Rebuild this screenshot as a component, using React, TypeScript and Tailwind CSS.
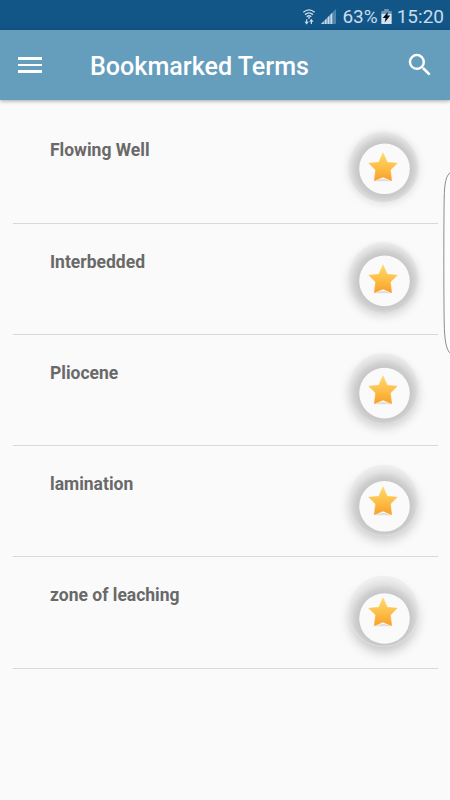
interface Term {
  name: string;
  // vertical distance from the button's centre to its inner disc
  discOffset: number;
  shadow: string;
}

const terms: Term[] = [
  { name: 'Flowing Well', discOffset: 2.3, shadow: 'shadow-[0_2px_9px_rgba(0,0,0,0.11)]' },
  { name: 'Interbedded', discOffset: 3.4, shadow: 'shadow-[0_4px_9px_rgba(0,0,0,0.13)]' },
  { name: 'Pliocene', discOffset: 4.6, shadow: 'shadow-[0_5px_10px_rgba(0,0,0,0.15)]' },
  { name: 'lamination', discOffset: 5.8, shadow: 'shadow-[0_6px_11px_-1px_rgba(0,0,0,0.18)]' },
  { name: 'zone of leaching', discOffset: 7, shadow: 'shadow-[0_7px_12px_-2px_rgba(0,0,0,0.22)]' },
];

function StatusBar() {
  return (
    <div className="flex h-[30px] items-center justify-end bg-[#125688] pt-[3px] pr-[6px] text-[19px] leading-none text-[#c9dcec]">
      <svg className="mr-[5px] h-[17px] w-[14px]" viewBox="0 0 14 18" fill="none" stroke="currentColor">
        <path d="M1 4.5Q7-.5 13 4.5M2.8 7Q7 3.3 11.2 7M4.6 9.3Q7 7.3 9.4 9.3" strokeWidth="1.5" />
        <circle cx="7" cy="10.5" r="1" fill="currentColor" stroke="none" />
        <path d="M4.5 12v4M9.5 17v-4" strokeWidth="1.3" />
        <path d="M2.2 14.5h4.6L4.5 17.5zM7.2 14.5h4.6L9.5 11.5z" fill="currentColor" stroke="none" />
      </svg>
      <svg className="mr-[6px] h-[15px] w-[15px]" viewBox="0 0 16 16" fill="currentColor">
        <path d="M0 16L16 0V16z" opacity=".35" />
        <path d="M0 16l3-3v3zM4 12l2-2v6H4zM7 9l2-2v9H7zM10 6l2-2v12h-2z" />
      </svg>
      <span>63%</span>
      <svg className="mr-[5px] ml-[3px] h-[15px] w-[11px]" viewBox="0 0 11 16">
        <path d="M3 0h5v2h3v3H0V2h3z" fill="#6c97b8" />
        <path d="M0 5h11v11H0z" fill="#d5e4ef" />
        <path d="M7 3L1.5 9.5h3L3.5 14.5l6-7.5H6.5z" fill="#05101a" />
      </svg>
      <span>15:20</span>
    </div>
  );
}

function Star({ id }: { id: string }) {
  return (
    <svg className="relative mt-[2px] h-[30px] w-[30px]" viewBox="0 0 30 30">
      <defs>
        <linearGradient id={id} x1="0" y1="0" x2="0" y2="1">
          <stop offset="0" stopColor="#ffd969" />
          <stop offset="0.5" stopColor="#fdc04a" />
          <stop offset="1" stopColor="#f99f29" />
        </linearGradient>
      </defs>
      <path d="M7 29.3Q15 24.5 23 29.3z" fill="#dedede" />
      <path
        d="M15 .8l4.2 9.5 10 .9-6.8 6.8 1.2 10.7L15 25l-8.6 3.7L7.6 18 .8 11.2l10-.9z"
        fill={`url(#${id})`}
        stroke={`url(#${id})`}
        strokeWidth="0.6"
        strokeLinejoin="round"
      />
    </svg>
  );
}

function BookmarkButton({ term, id }: { term: Term; id: string }) {
  const discY = 35.5 + term.discOffset;

  return (
    <button className={`relative mt-[18.6px] mr-[19px] flex h-[71px] w-[71px] items-center justify-center rounded-full ${term.shadow}`}>
      <svg className="absolute inset-0 h-[71px] w-[71px]" viewBox="0 0 71 71">
        <defs>
          <radialGradient id={`ring-${id}`} gradientUnits="userSpaceOnUse" cx="36.2" cy={discY} r="42">
            <stop offset="0.6" stopColor="#c6c6c6" />
            <stop offset="0.7" stopColor="#d0d0d0" />
            <stop offset="0.82" stopColor="#e2e2e2" />
            <stop offset="1" stopColor="#f2f2f2" />
          </radialGradient>
          <linearGradient id={`rim-${id}`} x1="0" y1="0" x2="0" y2="1">
            <stop offset="0.3" stopColor="#eeeeee" />
            <stop offset="1" stopColor="#d8d8d8" />
          </linearGradient>
        </defs>
        <circle cx="35.5" cy="35.5" r="35.5" fill={`url(#ring-${id})`} />
        <circle cx="35.5" cy="35.5" r="34.9" fill="none" stroke={`url(#rim-${id})`} strokeWidth="1.2" />
        <circle cx="36.5" cy={discY} r="25.3" fill="#fafafa" />
      </svg>
      <Star id={`star-${id}`} />
    </button>
  );
}

export default function App() {
  return (
    <div className="relative h-[800px] w-[450px] overflow-hidden bg-[#fafafa] font-['Roboto',sans-serif]">
      <StatusBar />
      <header className="relative flex h-[70px] items-center bg-[#659dbd] text-white shadow-[0_1px_4px_rgba(0,0,0,0.35)]">
        <div className="ml-[18px] flex w-6 flex-col gap-[4px]">
          <span className="h-[2.5px] bg-white" />
          <span className="h-[2.5px] bg-white" />
          <span className="h-[2.5px] bg-white" />
        </div>
        <h1 className="ml-12 flex-1 pt-[3px] text-[25.1px] font-medium">Bookmarked Terms</h1>
        <svg className="mr-[15px] h-[30px] w-[30px]" viewBox="0 0 24 24" fill="currentColor">
          <path d="M15.5 14h-.79l-.28-.27A6.47 6.47 0 0 0 16 9.5 6.5 6.5 0 1 0 9.5 16c1.61 0 3.09-.59 4.23-1.57l.27.28v.79l5 4.99L20.49 19l-4.99-5zm-6 0C7.01 14 5 11.99 5 9.5S7.01 5 9.5 5 14 7.01 14 9.5 11.99 14 9.5 14z" />
        </svg>
      </header>
      <ul className="mx-[12.5px] pt-[12.4px]">
        {terms.map((term, index) => (
          <li key={term.name} className="flex h-[111.25px] items-start justify-between border-b border-[#d8d8d8]">
            <span className="mt-[26px] ml-[37.5px] text-[17.5px] leading-6 font-bold text-[#696969]">{term.name}</span>
            <BookmarkButton term={term} id={`${index}`} />
          </li>
        ))}
      </ul>
      {/* edge panel handle */}
      <svg className="absolute top-[170px] right-0 h-[186px] w-[7px]" viewBox="0 0 7 186" fill="#fdfdfd" stroke="#8c8c8c">
        <path d="M8 2C3 5 1.5 13 1.2 28C.7 60 .7 120 1.2 152C1.5 170 3 180 8 184" />
      </svg>
    </div>
  );
}
